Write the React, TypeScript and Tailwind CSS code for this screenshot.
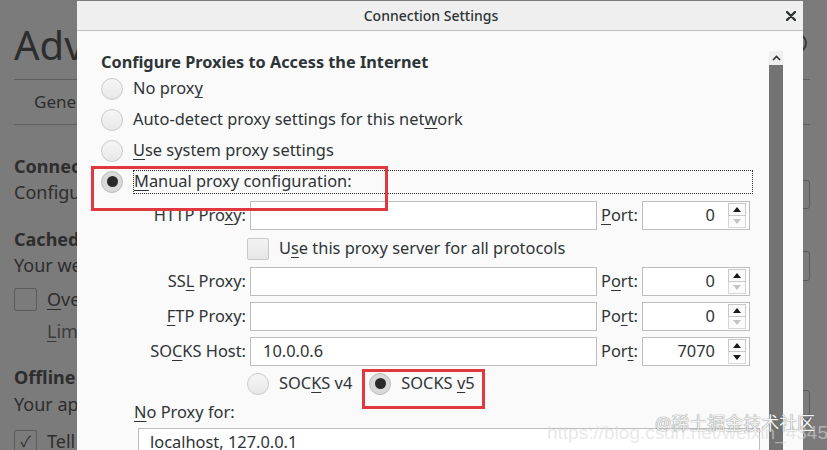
import React from "react";

const U = ({ children }: { children: React.ReactNode }) => (
  <span className="underline decoration-1 underline-offset-[3px]">{children}</span>
);

const Radio = ({ checked = false }: { checked?: boolean }) => (
  <div
    className={
      "w-[22px] h-[22px] shrink-0 rounded-full border flex items-center justify-center " +
      (checked
        ? "border-[#bdbdbd] bg-[#d9d9d9]"
        : "border-[#cacaca] bg-gradient-to-b from-[#f6f6f6] to-[#e8e8e8]")
    }
  >
    {checked && <div className="w-[11px] h-[11px] rounded-full bg-[#2a2a2a]" />}
  </div>
);

const Checkbox = () => (
  <div className="w-[22px] h-[22px] shrink-0 rounded-[2px] border border-[#c8c8c8] bg-gradient-to-b from-[#f3f3f3] to-[#e7e7e7]" />
);

const Spin = ({ value, downEnabled = false }: { value: string; downEnabled?: boolean }) => (
  <div className="ml-[4px] w-[108px] h-[29px] border border-[#bdbdbd] bg-white flex items-center">
    <div className="flex-1 text-right pr-[13px] text-[16.4px] text-[#2e3436]">{value}</div>
    <div className="w-[18px] mr-[3px] flex flex-col">
      <div className="h-[13px] border border-[#c8c8c8] bg-[#fbfbfb] flex items-center justify-center">
        <svg width="8" height="5" viewBox="0 0 8 5">
          <path d="M0 5 L4 0 L8 5 Z" fill="#1a1a1a" />
        </svg>
      </div>
      <div className="h-[12px] border border-t-0 border-[#d6d6d6] bg-[#fbfbfb] flex items-center justify-center">
        <svg width="8" height="5" viewBox="0 0 8 5">
          <path d="M0 0 L4 5 L8 0 Z" fill={downEnabled ? "#1a1a1a" : "#c4c4c4"} />
        </svg>
      </div>
    </div>
  </div>
);

const ProxyRow = ({
  label,
  value,
  port,
  portLabel,
  downEnabled,
  className = "",
}: {
  label: React.ReactNode;
  value?: string;
  port: string;
  portLabel: React.ReactNode;
  downEnabled?: boolean;
  className?: string;
}) => (
  <div className={"flex items-center h-[29px] " + className}>
    <div className="w-[145px] text-right text-[16.4px] text-[#2e3436] whitespace-nowrap">{label}</div>
    <div className="ml-[4px] w-[347px] h-[29px] border border-[#bdbdbd] bg-white flex items-center pl-[12px] text-[16.4px] text-[#2e3436]">
      {value}
    </div>
    <div className="ml-[4px] w-[37px] text-[16.4px] text-[#2e3436] whitespace-nowrap">{portLabel}</div>
    <Spin value={port} downEnabled={downEnabled} />
  </div>
);

export default function App() {
  return (
    <div className="relative w-[827px] h-[450px] overflow-hidden bg-[#7b7b7b] font-['Noto_Sans','Noto_Sans_CJK_SC',sans-serif]">
      {/* background page (dimmed) */}
      <div className="w-[796px] ml-[14px] flex flex-col text-[#2d2d2d]">
        <div className="h-[80px] flex items-center justify-between border-b border-[#5f5f5f]">
          <div className="text-[40px] leading-none pt-[10px]">Advanced</div>
          <div className="w-[20px] h-[20px] mr-[3px] mt-[6px] rounded-full border-2 border-[#3a3a3a]" />
        </div>
        <div className="h-[45px] flex items-center pl-[20px] text-[17px] border-b border-[#5f5f5f]">General</div>
        <div className="h-[26px] mt-[28px] flex items-center text-[18px] font-bold">Connection</div>
        <div className="h-[26px] flex items-center justify-between text-[18px]">
          <span>Configure how Firefox connects to the Internet</span>
          <div className="w-[90px] h-[29px] mt-[4px] border border-[#5a5a5a] rounded-[3px]" />
        </div>
        <div className="h-[26px] mt-[21px] flex items-center text-[18px] font-bold">Cached Web Content</div>
        <div className="h-[26px] flex items-center justify-between text-[18px]">
          <span>Your web content cache is using 0 bytes</span>
          <div className="w-[90px] h-[30px] mt-[2px] border border-[#5a5a5a] rounded-[3px]" />
        </div>
        <div className="h-[42px] flex items-center gap-[10px] text-[18px]">
          <div className="w-[23px] h-[23px] border border-[#5a5a5a] rounded-[2px]" />
          <span><U>O</U>verride automatic cache management</span>
        </div>
        <div className="h-[22px] flex items-center pl-[33px] text-[18px] text-[#3b3b3b]">
          <span><U>L</U>imit cache to</span>
        </div>
        <div className="h-[26px] mt-[22px] flex items-center text-[18px] font-bold">Offline Web Content</div>
        <div className="h-[26px] mt-[1px] flex items-center justify-between text-[18px]">
          <span>Your application cache is using 0 bytes</span>
          <div className="w-[90px] h-[30px] mt-[2px] border border-[#5a5a5a] rounded-[3px]" />
        </div>
        <div className="h-[34px] mt-[7px] flex items-center gap-[10px] text-[18px]">
          <div className="w-[23px] h-[23px] border border-[#5a5a5a] rounded-[2px] flex items-center justify-center text-[15px] leading-none">
            ✓
          </div>
          <span><U>T</U>ell me when a website asks to store data</span>
        </div>
      </div>

      {/* dialog */}
      <div className="absolute left-[77px] top-[1px] w-[726px] h-[460px] bg-[#fafafa] flex flex-col text-[#2e3436]">
        <div className="h-[30px] shrink-0 bg-[#efefef] border-b border-[#c2c2c2] flex items-center">
          <div className="flex-1 text-center text-[14px] font-medium pl-[6px]">Connection Settings</div>
          <div className="w-[24px] flex items-center justify-center">
            <svg width="10" height="10" viewBox="0 0 10 10">
              <path d="M1 1 L9 9 M9 1 L1 9" stroke="#2e3436" strokeWidth="2.4" strokeLinecap="round" />
            </svg>
          </div>
        </div>
        <div className="flex flex-1">
          <div className="w-[692px] pl-[24px] pt-[20px] flex flex-col">
            <div className="h-[22px] flex items-center text-[16.3px] font-bold whitespace-nowrap">
              Configure Proxies to Access the Internet
            </div>
            <div className="h-[31px] flex items-center gap-[10px] text-[16.4px]">
              <Radio />
              <span>No prox<U>y</U></span>
            </div>
            <div className="h-[31px] flex items-center gap-[10px] text-[16.4px]">
              <Radio />
              <span>Auto-detect proxy settings for this net<U>w</U>ork</span>
            </div>
            <div className="h-[31px] flex items-center gap-[10px] text-[16.4px]">
              <Radio />
              <span><U>U</U>se system proxy settings</span>
            </div>
            <div className="h-[31px] flex items-center gap-[10px] text-[16.4px]">
              <Radio checked />
              <div className="w-[620px] h-[24px] border border-dotted border-[#2e3436] flex items-center">
                <span><U>M</U>anual proxy configuration:</span>
              </div>
            </div>

            <ProxyRow
              className="mt-[4px]"
              label={<>HTTP Pro<U>x</U>y:</>}
              portLabel={<><U>P</U>ort:</>}
              port="0"
            />
            <div className="h-[25px] my-[6px] ml-[146px] flex items-center gap-[10px] text-[16.4px]">
              <Checkbox />
              <span>U<U>s</U>e this proxy server for all protocols</span>
            </div>
            <ProxyRow
              label={<>SS<U>L</U> Proxy:</>}
              portLabel={<>P<U>o</U>rt:</>}
              port="0"
            />
            <ProxyRow
              className="mt-[6px]"
              label={<><U>F</U>TP Proxy:</>}
              portLabel={<>Po<U>r</U>t:</>}
              port="0"
            />
            <ProxyRow
              className="mt-[6px]"
              label={<>SO<U>C</U>KS Host:</>}
              value="10.0.0.6"
              portLabel={<>Por<U>t</U>:</>}
              port="7070"
              downEnabled
            />
            <div className="h-[23px] mt-[6px] ml-[146px] flex items-center text-[16.4px]">
              <Radio />
              <span className="ml-[10px]">SOC<U>K</U>S v4</span>
              <div className="ml-[17px]">
                <Radio checked />
              </div>
              <span className="ml-[10px]">SOCKS <U>v</U>5</span>
            </div>
            <div className="h-[30px] mt-[2px] pl-[33px] flex items-center text-[16.4px]">
              <span><U>N</U>o Proxy for:</span>
            </div>
            <div className="ml-[37px] mt-[1px] w-[622px] h-[29px] border border-[#bdbdbd] bg-white flex items-center pl-[11px] text-[16.4px]">
              localhost, 127.0.0.1
            </div>
          </div>
          <div className="w-[14px] flex flex-col">
            <div className="h-[14px] mt-[20px] bg-[#eeeeee] flex items-center justify-center">
              <svg width="9" height="6" viewBox="0 0 9 6">
                <path d="M1 5 L4.5 1.5 L8 5" stroke="#2e3436" strokeWidth="1.6" fill="none" />
              </svg>
            </div>
            <div className="flex-1 bg-[#737373]" />
          </div>
        </div>
      </div>

      {/* annotation boxes */}
      <div className="absolute left-[91px] top-[166px] w-[297px] h-[45px] border-[3px] border-[#e0383e]" />
      <div className="absolute left-[362px] top-[369px] w-[123px] h-[40px] border-[3px] border-[#e0383e]" />

      {/* watermark */}
      <div className="absolute left-[547px] top-[423px] text-[19px] leading-none text-[#d8d8d8]/60 whitespace-nowrap font-['Liberation_Sans',sans-serif]">
        https://blog.csdn.net/weixin_43452254
      </div>
      <div className="absolute left-[655px] top-[414px] text-[18px] leading-none text-[#f2f2f2] whitespace-nowrap [text-shadow:0_0_1px_rgba(60,60,60,0.9)]">
        @稀土掘金技术社区
      </div>
    </div>
  );
}
